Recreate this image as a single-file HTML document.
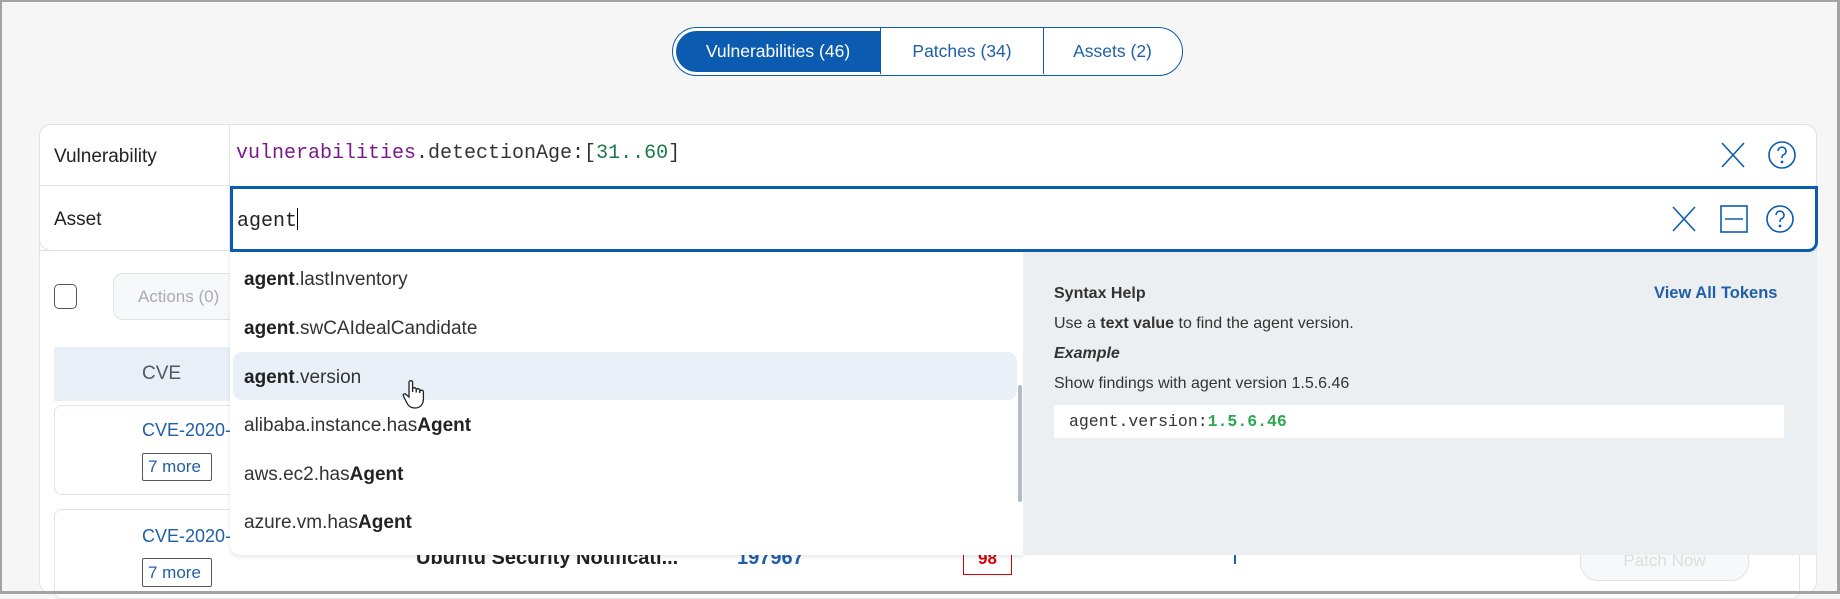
<!DOCTYPE html>
<html><head><meta charset="utf-8"><style>
*{box-sizing:border-box;margin:0;padding:0}
body{width:1840px;height:594px;overflow:hidden;background:#f6f6f6;font-family:"Liberation Sans",sans-serif;position:relative}
.frame{position:absolute;left:0;top:0;width:1840px;height:594px;border:2px solid #a3a3a3;border-right-width:3px;border-bottom-width:3px;pointer-events:none;z-index:50}
.abs{position:absolute}
.seg{left:672px;top:27px;width:511px;height:49px;border:1.5px solid #0b5cb0;border-radius:25px;background:#fff}
.seg .on{position:absolute;left:3px;top:3px;width:204px;height:41px;background:#0b5cb0;border-radius:21px 0 0 21px;color:#fff;font-size:17.5px;line-height:41px;text-align:center}
.seg .t{position:absolute;top:0;line-height:46px;font-size:17.5px;color:#1f5fa8;text-align:center}
.main{left:39px;top:124px;width:1778px;height:470px;background:#fff;border:1px solid #e4e4e4;border-radius:12px}
.lbl{font-size:19px;color:#222}
.code{font-family:"Liberation Mono",monospace;font-size:20px}
.list{left:230px;top:252px;width:793px;height:303px;background:#fff;border-radius:0 0 0 10px;box-shadow:0 2px 4px rgba(0,0,0,.1);z-index:10}
.it{position:absolute;left:14px;font-size:19px;color:#333}
.it b{color:#222}
.help{left:1023px;top:252px;width:794px;height:303px;background:#eceff1;z-index:10}
</style></head><body>
<div class="abs seg"><div class="on">Vulnerabilities (46)</div>
<div class="t" style="left:207px;width:163px;border-left:1px solid #0b5cb0">Patches (34)</div>
<div class="t" style="left:370px;width:138px;border-left:1px solid #0b5cb0">Assets (2)</div></div>

<div class="abs main"></div>
<div class="abs" style="left:39px;top:124px;width:1778px;height:127px;background:#fff;border:1px solid #e2e2e2;border-radius:12px 12px 0 0;z-index:5"></div>
<div class="abs" style="left:39px;top:124px;width:191px;height:127px;background:#fff;border:1px solid #e2e2e2;border-right:1px solid #e6e6e6;border-radius:12px 0 0 12px;z-index:6"></div>
<div class="abs" style="left:40px;top:185px;width:190px;height:1px;background:#e6e6e6;z-index:7"></div>
<div class="abs lbl" style="left:54px;top:146px;z-index:7">Vulnerability</div>
<div class="abs lbl" style="left:54px;top:209px;z-index:7">Asset</div>
<div class="abs code" style="left:236px;top:142px;z-index:7"><span style="color:#7a1a8a">vulnerabilities</span><span style="color:#333">.detectionAge:[</span><span style="color:#1f7a4a">31..60</span><span style="color:#333">]</span></div>
<div class="abs" style="left:230px;top:186px;width:1588px;height:66px;border:3px solid #0b5cb0;border-radius:0 0 10px 0;background:#fff;z-index:8"></div>
<div class="abs code" style="left:237px;top:208px;z-index:9;color:#222">agent<span style="display:inline-block;width:1px;height:22px;background:#000;vertical-align:-4px"></span></div>
<svg class="abs" style="left:1720px;top:140px;z-index:9" width="80" height="30" viewBox="0 0 80 30" fill="none" stroke="#0b5cb0" stroke-width="1.6"><path d="M2 3L24 27M24 3L2 27"/><circle cx="62" cy="15" r="13"/><path d="M58 11a4 4 0 1 1 5 4c-1 .6-1 1.5-1 3"/><circle cx="62" cy="22" r=".6" fill="#0b5cb0"/></svg>
<svg class="abs" style="left:1671px;top:204px;z-index:9" width="126" height="30" viewBox="0 0 126 30" fill="none" stroke="#0b5cb0" stroke-width="1.6"><path d="M2 3L24 27M24 3L2 27"/><rect x="50" y="2" width="26" height="26"/><path d="M54 15H72"/><circle cx="109" cy="15" r="13"/><path d="M105 11a4 4 0 1 1 5 4c-1 .6-1 1.5-1 3"/><circle cx="109" cy="22" r=".6" fill="#0b5cb0"/></svg>

<div class="abs" style="left:54px;top:284px;width:23px;height:25px;border:1.5px solid #556;border-radius:5px"></div>
<div class="abs" style="left:113px;top:273px;width:130px;height:47px;border:1px solid #e2e2e2;border-radius:10px;background:#f7f8f9;color:#aab;font-size:17px;line-height:45px;padding-left:24px">Actions (0)</div>
<div class="abs" style="left:54px;top:347px;width:1746px;height:54px;background:#e8eff7"></div>
<div class="abs" style="left:142px;top:363px;font-size:19px;color:#556">CVE</div>
<div class="abs" style="left:54px;top:405px;width:1746px;height:90px;border:1px solid #e2e2e2;border-radius:8px;background:#fff"></div>
<div class="abs" style="left:142px;top:420px;font-size:18px;color:#1f5fa8">CVE-2020-9</div>
<div class="abs" style="left:142px;top:453px;width:70px;height:28px;border:1px solid #556;border-radius:2px;font-size:17px;color:#1f5fa8;line-height:26px;padding-left:5px">7 more</div>
<div class="abs" style="left:54px;top:509px;width:1746px;height:90px;border:1px solid #e2e2e2;border-radius:8px;background:#fff"></div>
<div class="abs" style="left:142px;top:526px;font-size:18px;color:#1f5fa8">CVE-2020-1</div>
<div class="abs" style="left:142px;top:558px;width:70px;height:29px;border:1px solid #556;border-radius:2px;font-size:17px;color:#1f5fa8;line-height:27px;padding-left:5px">7 more</div>
<div class="abs" style="left:416px;top:547px;font-size:20px;font-weight:bold;color:#222">Ubuntu Security Notificati...</div>
<div class="abs" style="left:737px;top:547px;font-size:20px;font-weight:bold;color:#1f5fa8">197967</div>
<div class="abs" style="left:963px;top:543px;width:49px;height:32px;border:1.5px solid #d00;color:#d00;font-weight:bold;text-align:center;font-size:17px;line-height:30px">98</div>
<div class="abs" style="left:1234px;top:548px;width:2px;height:16px;background:#1f5fa8"></div>
<div class="abs" style="left:1580px;top:540px;width:169px;height:41px;border:1px solid #e2e2e2;border-radius:18px;background:#f7f8f9;color:#ddd;font-size:17px;text-align:center;line-height:39px">Patch Now</div>

<div class="abs list">
<div class="it" style="top:17px"><b>agent</b>.lastInventory</div>
<div class="it" style="top:66px"><b>agent</b>.swCAIdealCandidate</div>
<div class="abs" style="left:3px;top:100px;width:784px;height:48px;background:#e9f0f8;border-radius:9px"></div>
<div class="it" style="top:115px"><b>agent</b>.version</div>
<div class="it" style="top:163px">alibaba.instance.has<b>Agent</b></div>
<div class="it" style="top:212px">aws.ec2.has<b>Agent</b></div>
<div class="it" style="top:260px">azure.vm.has<b>Agent</b></div>
<div class="abs" style="left:788px;top:133px;width:4px;height:117px;background:#b3bcc5;border-radius:2px"></div>
<svg class="abs" style="left:172px;top:127px" width="24" height="32" viewBox="0 0 24 32" fill="#fff" stroke="#222" stroke-width="1.3"><path d="M7 18V3.5a1.8 1.8 0 0 1 3.6 0V13V10.5a1.8 1.8 0 0 1 3.6 0V13.5V11.5a1.8 1.8 0 0 1 3.6 0V14V13a1.8 1.8 0 0 1 3.6 0v7c0 5-3 9-8 9s-7-2-9-6l-3-6c-.8-1.6 1.5-3 2.6-1.5z"/></svg>
</div>
<div class="abs help">
<div class="abs" style="left:31px;top:33px;font-size:16px;font-weight:bold;color:#333">Syntax Help</div>
<div class="abs" style="left:631px;top:32px;font-size:16.5px;font-weight:bold;color:#1f5fa8">View All Tokens</div>
<div class="abs" style="left:31px;top:63px;font-size:16px;color:#333">Use a <b>text value</b> to find the agent version.</div>
<div class="abs" style="left:31px;top:93px;font-size:16px;font-weight:bold;font-style:italic;color:#333">Example</div>
<div class="abs" style="left:31px;top:123px;font-size:16px;color:#333">Show findings with agent version 1.5.6.46</div>
<div class="abs" style="left:31px;top:153px;width:730px;height:33px;background:#fff;font-family:'Liberation Mono',monospace;font-size:16.5px;line-height:33px;padding-left:15px;color:#333">agent.version:<b style="color:#2ea84f">1.5.6.46</b></div>
</div>
<div class="frame"></div>
</body></html>
